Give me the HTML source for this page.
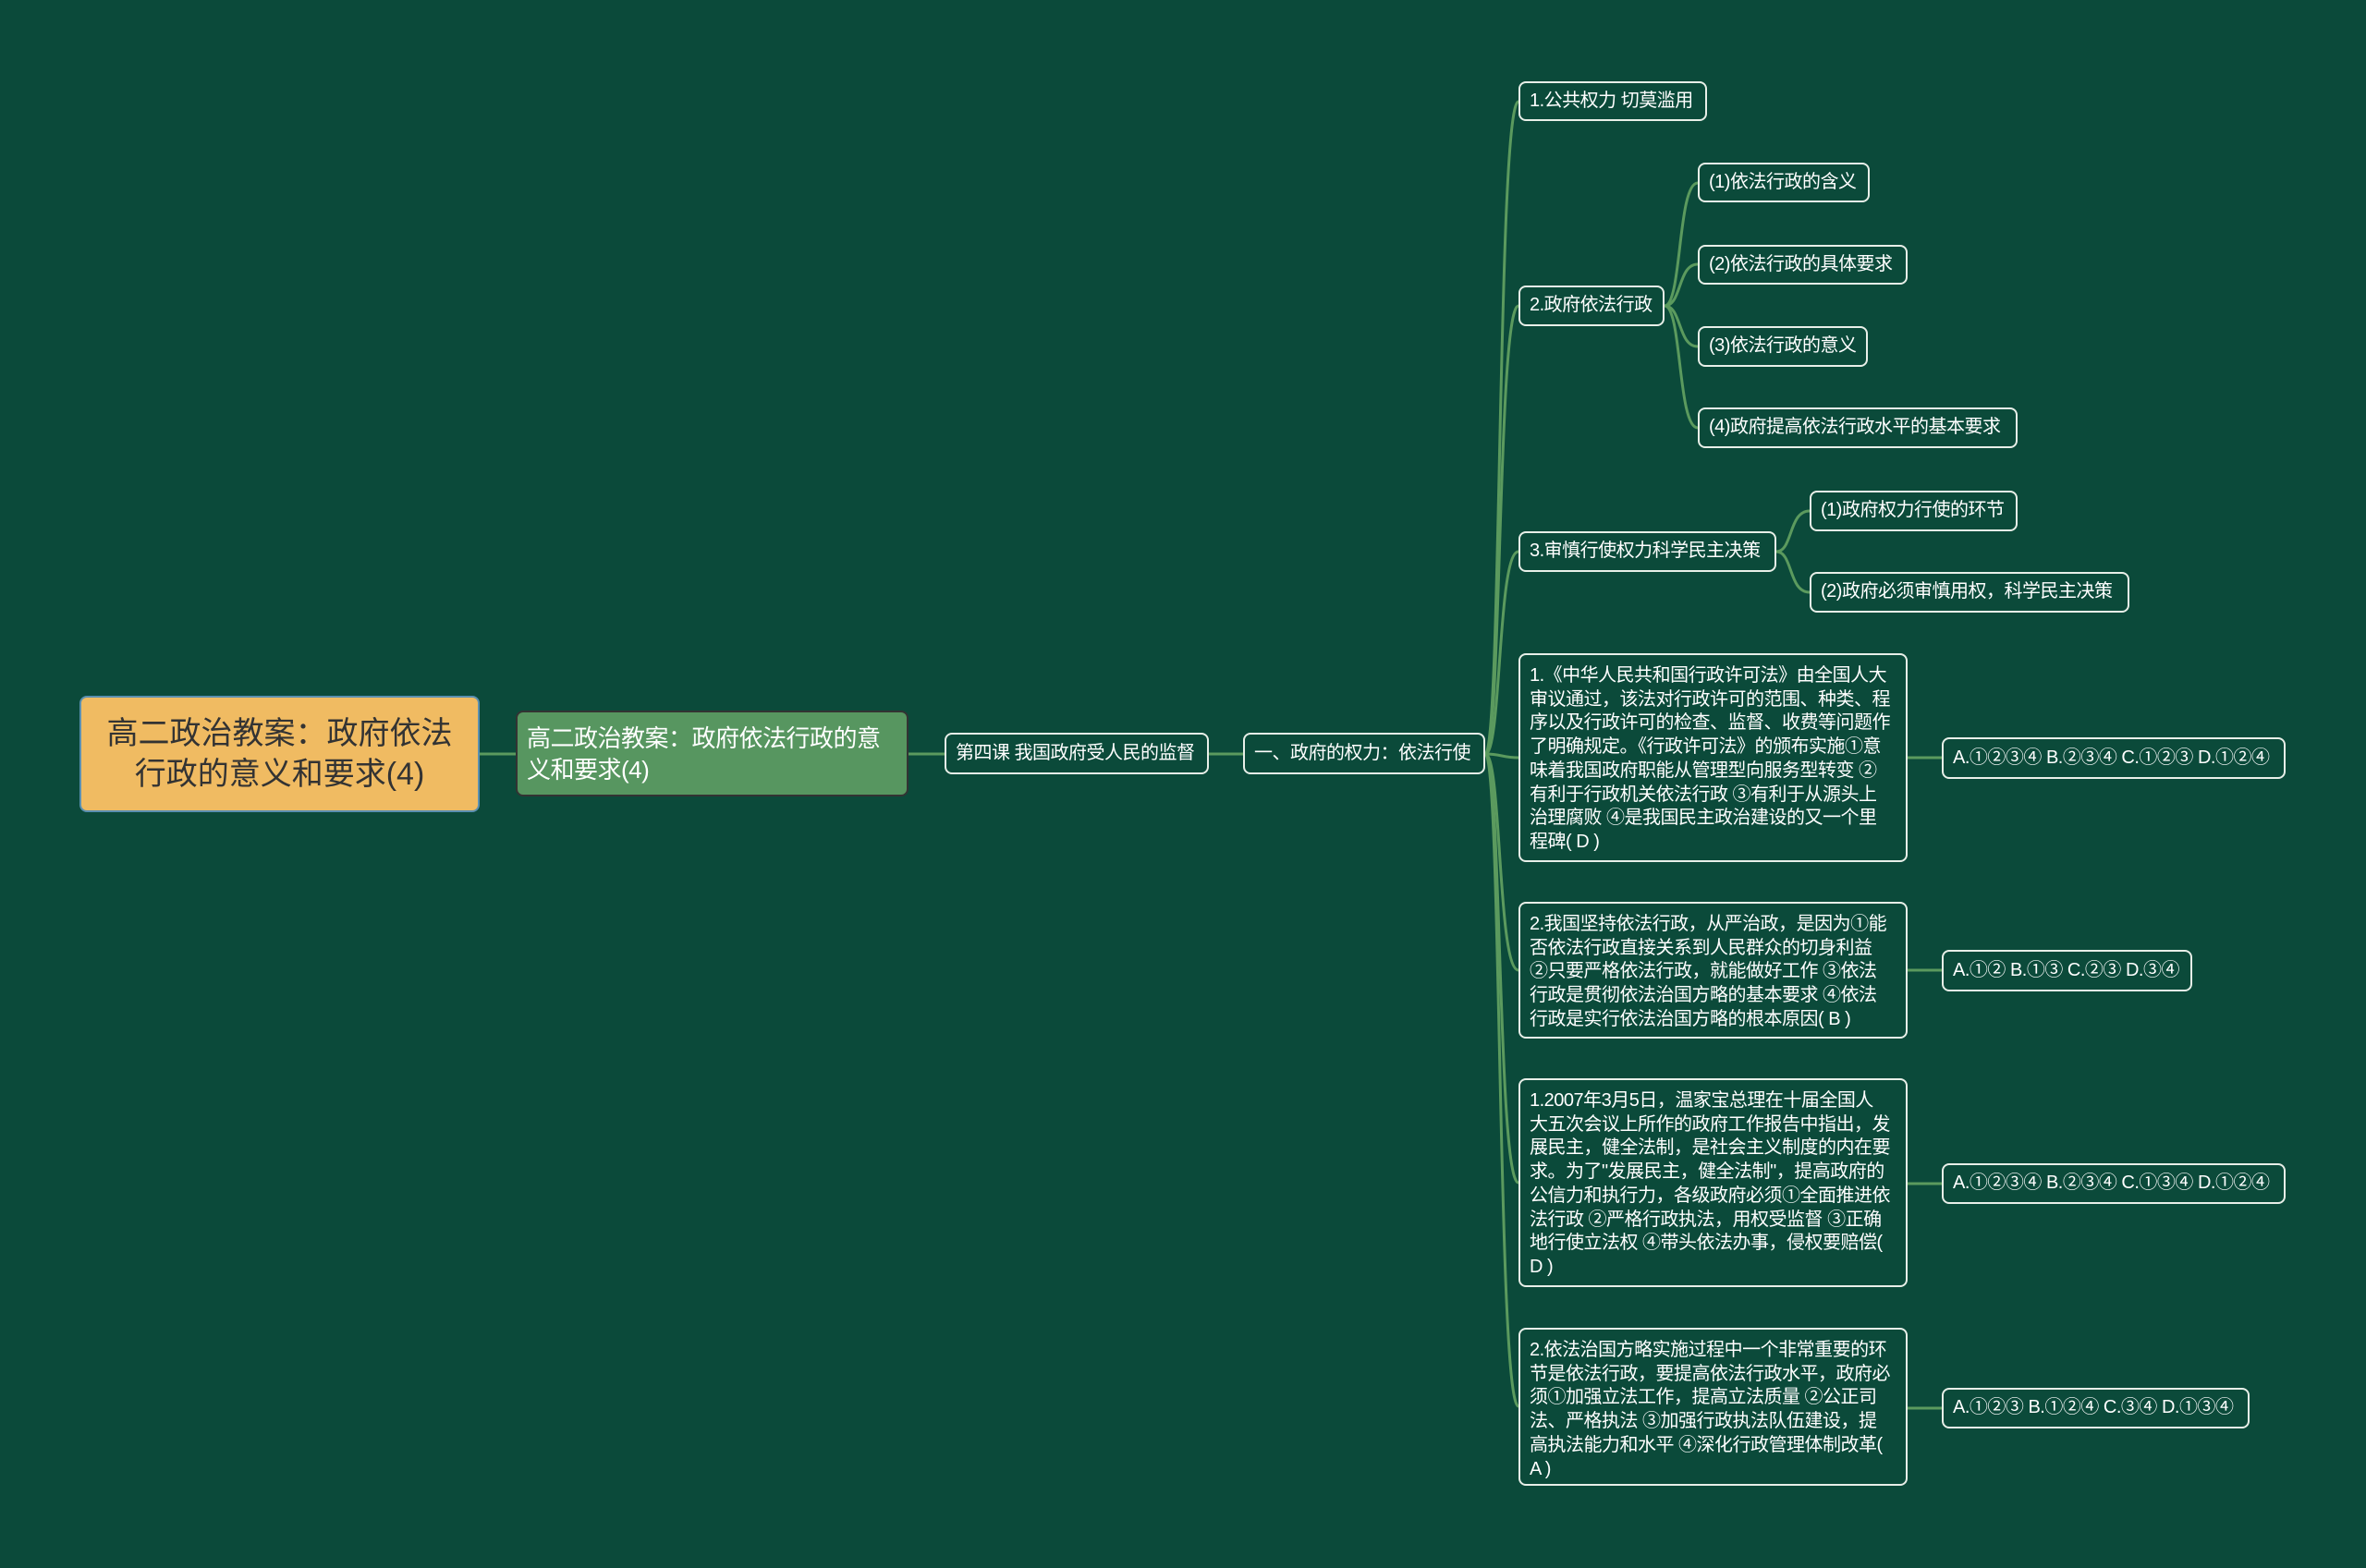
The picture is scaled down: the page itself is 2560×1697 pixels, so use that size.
<!DOCTYPE html>
<html><head><meta charset="utf-8"><style>
html,body{margin:0;padding:0}
body{width:2560px;height:1697px;background:#0b4a3a;position:relative;overflow:hidden;font-family:"Liberation Sans","Noto Sans CJK SC",sans-serif;color:#fff}
.n{position:absolute;box-sizing:border-box;border:2px solid #e8efe8;border-radius:8px;background:#0b4a3a;font-size:20px;line-height:25.7px;padding:0 10px;display:flex;align-items:center;white-space:nowrap;letter-spacing:-0.5px}
.q{align-items:flex-start;padding-top:10px;white-space:normal}
svg{position:absolute;left:0;top:0}
</style></head><body>
<svg width="2560" height="1697" fill="none" stroke="#5b9a5e" stroke-width="3">
<path d="M519 816 L558 816"/>
<path d="M983 816 L1022 816"/>
<path d="M1308 816 L1345 816"/>
<path d="M1607 816 C1625 816,1620 110,1643 110"/>
<path d="M1607 816 C1625 816,1620 331,1643 331"/>
<path d="M1607 816 C1625 816,1620 597,1643 597"/>
<path d="M1607 816 C1625 816,1625 820,1643 820"/>
<path d="M1607 816 C1625 816,1620 1050,1643 1050"/>
<path d="M1607 816 C1625 816,1620 1280,1643 1280"/>
<path d="M1607 816 C1625 816,1620 1522,1643 1522"/>
<path d="M1801 331 C1820 331,1815 198,1837 198"/>
<path d="M1801 331 C1820 331,1815 286,1837 286"/>
<path d="M1801 331 C1820 331,1815 375,1837 375"/>
<path d="M1801 331 C1820 331,1815 463,1837 463"/>
<path d="M1922 597 C1940 597,1935 553,1958 553"/>
<path d="M1922 597 C1940 597,1935 641,1958 641"/>
<path d="M2064 820 L2101 820"/>
<path d="M2064 1050 L2101 1050"/>
<path d="M2064 1281 L2101 1281"/>
<path d="M2064 1524 L2101 1524"/>
</svg>
<div class="n" style="left:86px;top:753px;width:433px;height:126px;background:#f0bb62;border-color:#5a8fb0;color:#333;font-size:34px;line-height:44px;justify-content:center;text-align:center;white-space:normal;letter-spacing:0">高二政治教案：政府依法<br>行政的意义和要求(4)</div>
<div class="n" style="left:558px;top:769px;width:425px;height:93px;background:#579660;border-color:#333;font-size:26px;line-height:34px;white-space:normal;letter-spacing:-0.5px">高二政治教案：政府依法行政的意义和要求(4)</div>
<div class="n" style="left:1022px;top:793px;width:286px;height:45px">第四课 我国政府受人民的监督</div>
<div class="n" style="left:1345px;top:793px;width:262px;height:45px">一、政府的权力：依法行使</div>
<div class="n" style="left:1643px;top:88px;width:204px;height:43px">1.公共权力 切莫滥用</div>
<div class="n" style="left:1643px;top:309px;width:158px;height:44px">2.政府依法行政</div>
<div class="n" style="left:1837px;top:176px;width:186px;height:43px">(1)依法行政的含义</div>
<div class="n" style="left:1837px;top:265px;width:227px;height:43px">(2)依法行政的具体要求</div>
<div class="n" style="left:1837px;top:353px;width:184px;height:44px">(3)依法行政的意义</div>
<div class="n" style="left:1837px;top:441px;width:346px;height:44px">(4)政府提高依法行政水平的基本要求</div>
<div class="n" style="left:1643px;top:575px;width:279px;height:44px">3.审慎行使权力科学民主决策</div>
<div class="n" style="left:1958px;top:531px;width:225px;height:44px">(1)政府权力行使的环节</div>
<div class="n" style="left:1958px;top:619px;width:346px;height:44px">(2)政府必须审慎用权，科学民主决策</div>
<div class="n q" style="left:1643px;top:707px;width:421px;height:226px">1.《中华人民共和国行政许可法》由全国人大<br>审议通过，该法对行政许可的范围、种类、程<br>序以及行政许可的检查、监督、收费等问题作<br>了明确规定。《行政许可法》的颁布实施①意<br>味着我国政府职能从管理型向服务型转变 ②<br>有利于行政机关依法行政 ③有利于从源头上<br>治理腐败 ④是我国民主政治建设的又一个里<br>程碑( D )</div>
<div class="n" style="left:2101px;top:798px;width:372px;height:45px">A.①②③④ B.②③④ C.①②③ D.①②④</div>
<div class="n q" style="left:1643px;top:976px;width:421px;height:148px">2.我国坚持依法行政，从严治政，是因为①能<br>否依法行政直接关系到人民群众的切身利益<br>②只要严格依法行政，就能做好工作 ③依法<br>行政是贯彻依法治国方略的基本要求 ④依法<br>行政是实行依法治国方略的根本原因( B )</div>
<div class="n" style="left:2101px;top:1028px;width:271px;height:45px">A.①② B.①③ C.②③ D.③④</div>
<div class="n q" style="left:1643px;top:1167px;width:421px;height:226px">1.2007年3月5日，温家宝总理在十届全国人<br>大五次会议上所作的政府工作报告中指出，发<br>展民主，健全法制，是社会主义制度的内在要<br>求。为了"发展民主，健全法制"，提高政府的<br>公信力和执行力，各级政府必须①全面推进依<br>法行政 ②严格行政执法，用权受监督 ③正确<br>地行使立法权 ④带头依法办事，侵权要赔偿(<br>D )</div>
<div class="n" style="left:2101px;top:1259px;width:372px;height:44px">A.①②③④ B.②③④ C.①③④ D.①②④</div>
<div class="n q" style="left:1643px;top:1437px;width:421px;height:171px">2.依法治国方略实施过程中一个非常重要的环<br>节是依法行政，要提高依法行政水平，政府必<br>须①加强立法工作，提高立法质量 ②公正司<br>法、严格执法 ③加强行政执法队伍建设，提<br>高执法能力和水平 ④深化行政管理体制改革(<br>A )</div>
<div class="n" style="left:2101px;top:1502px;width:333px;height:44px">A.①②③ B.①②④ C.③④ D.①③④</div>
</body></html>
